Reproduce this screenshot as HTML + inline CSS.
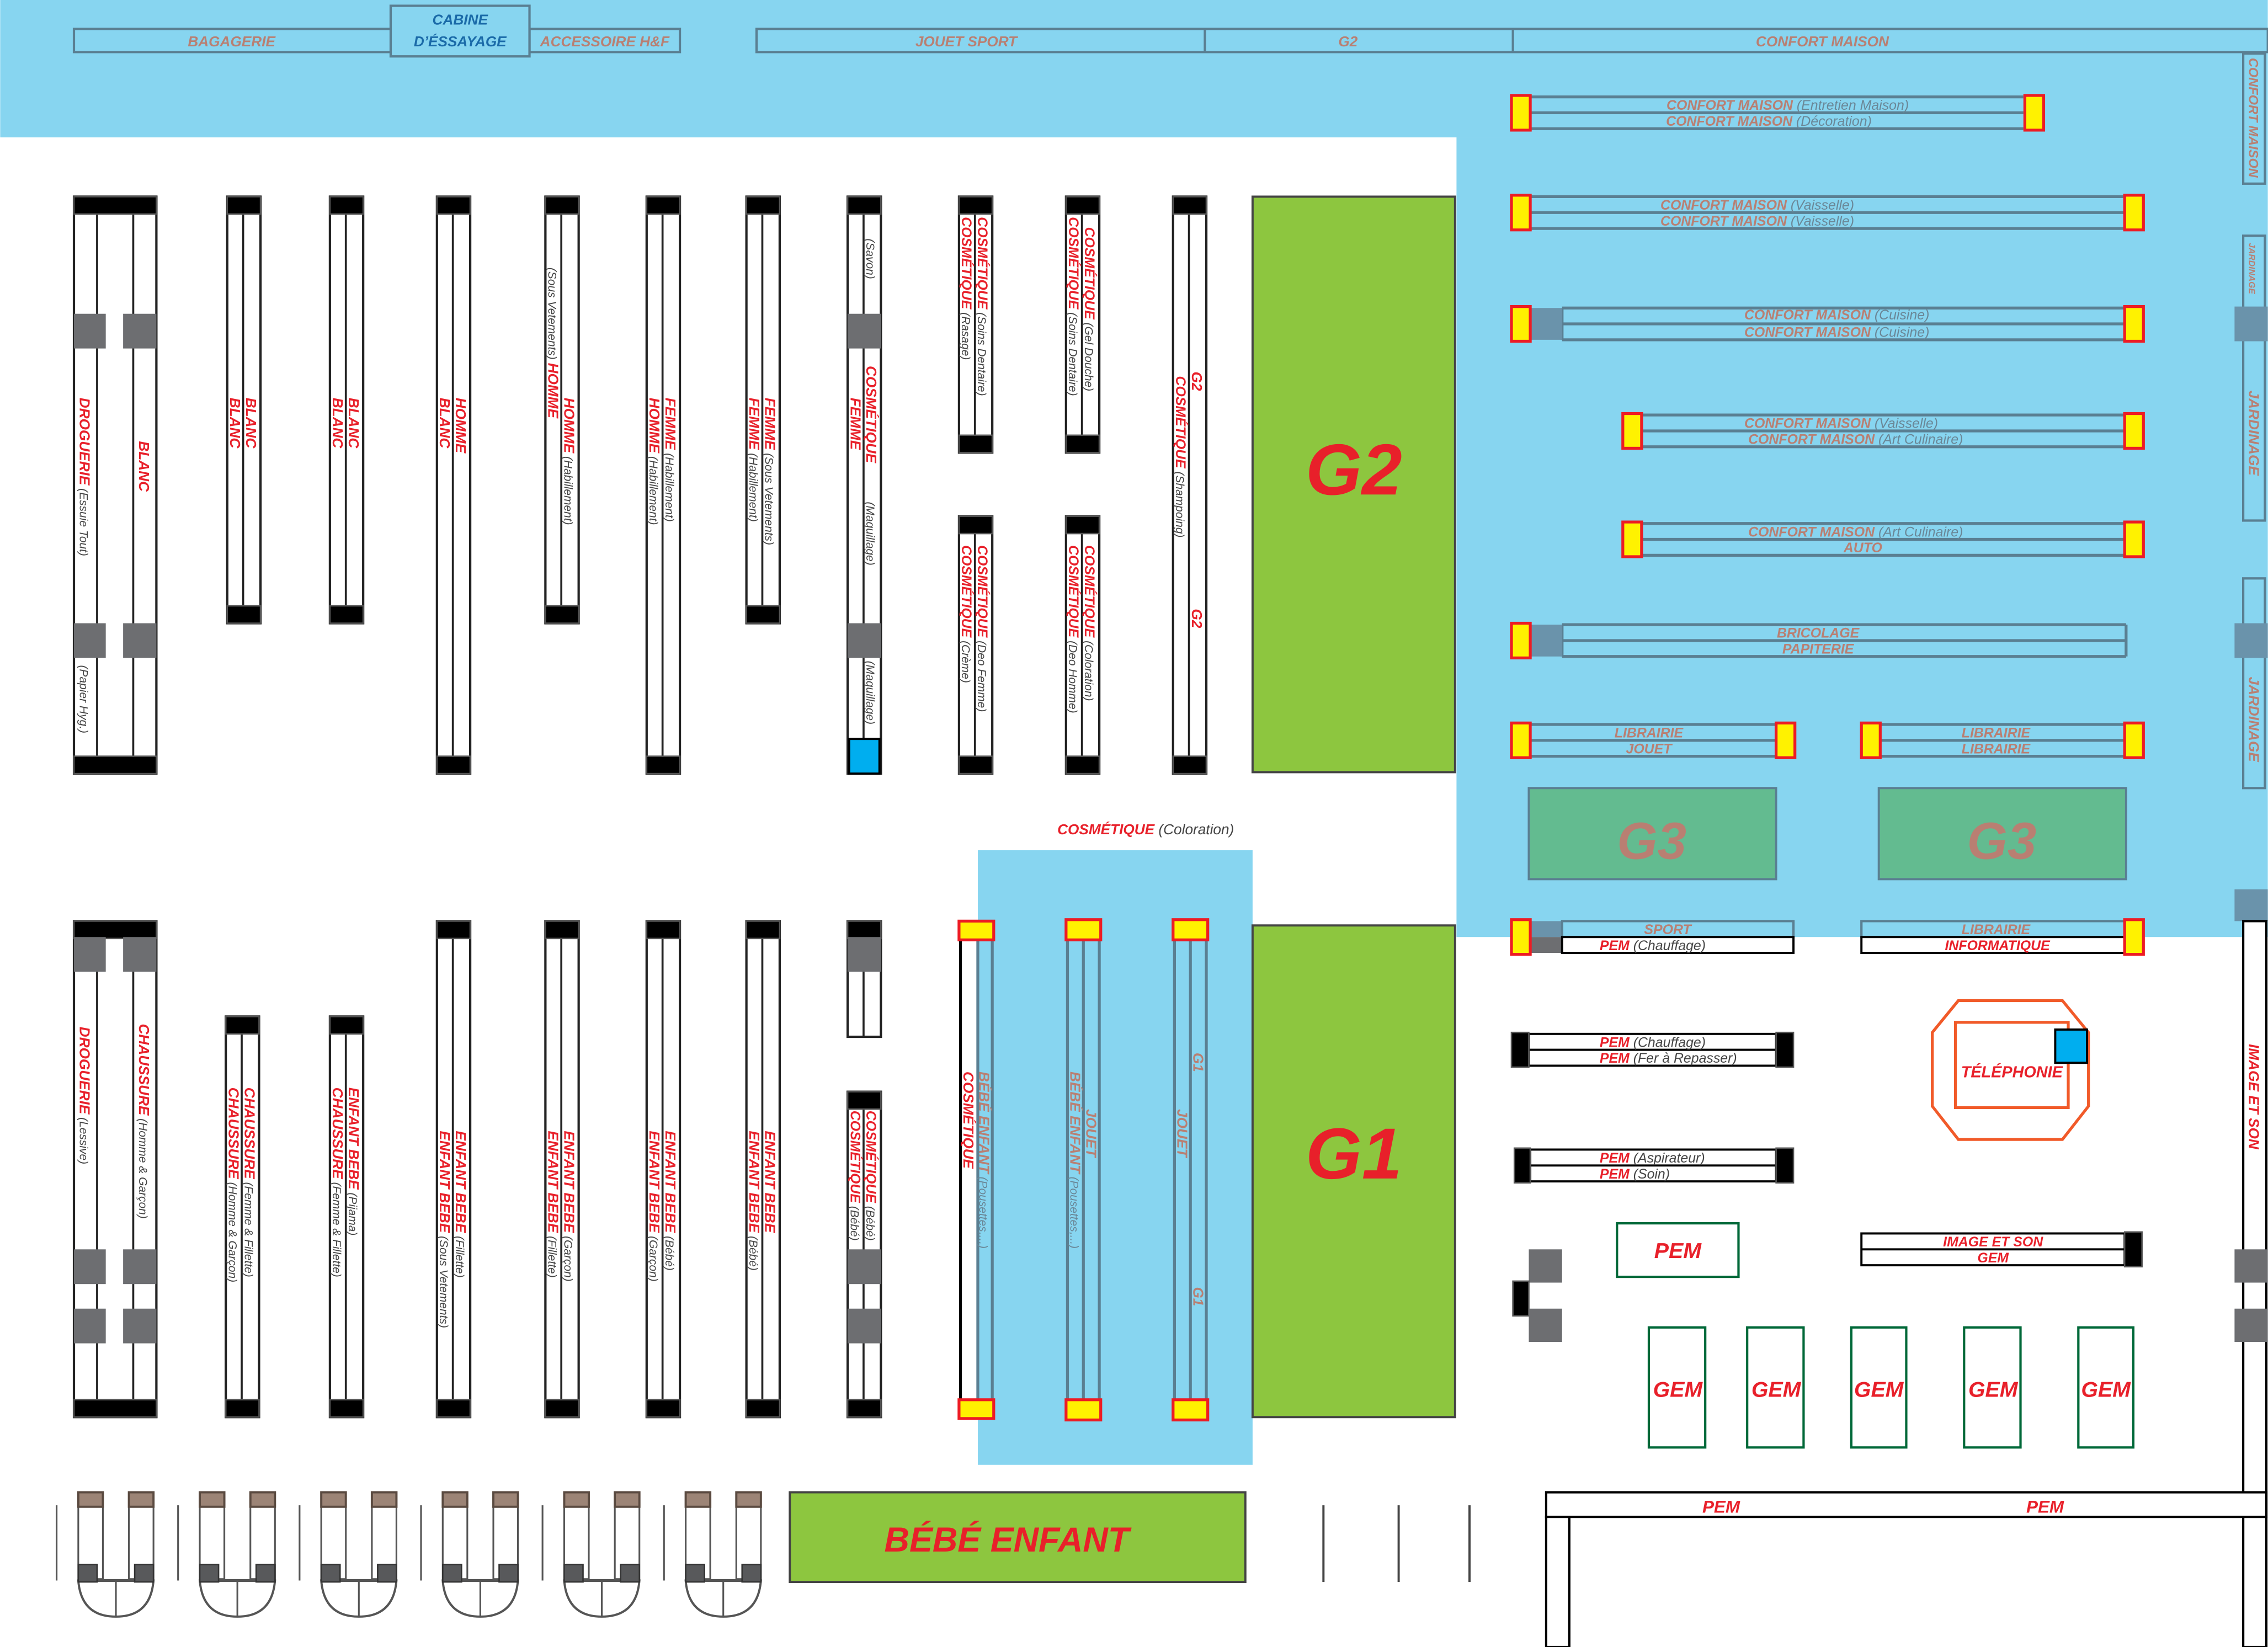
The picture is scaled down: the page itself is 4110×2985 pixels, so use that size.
<!DOCTYPE html>
<html><head><meta charset="utf-8"><style>
html,body{margin:0;padding:0;background:#fff;}
svg{display:block;}
text{font-family:"Liberation Sans Narrow","Liberation Sans",sans-serif;font-style:italic;}
.r{fill:#e8202a;font-weight:bold;}
.g{fill:#444;font-weight:normal;}
.s{fill:#b97f72;font-weight:bold;}
.p{fill:#6a8797;font-weight:normal;}
.sh{fill:#fff;stroke:#222;stroke-width:1.6;}
.ln{stroke:#222;stroke-width:1.4;}
.cap{fill:#000;stroke:#555;stroke-width:1;}
.gr{fill:#6d6e71;}
.bl{fill:#5a7f92;}
.y{fill:#fff200;stroke:#ed1c24;stroke-width:2;}
.bs{fill:none;stroke:#5a7f92;stroke-width:1.6;}
</style></head><body>
<svg width="4110" height="2985" viewBox="0 0 1568 1139" xmlns="http://www.w3.org/2000/svg">
<rect width="1568" height="1139" fill="#fff"/>
<!-- blue zones -->
<rect x="0" y="0" width="1568" height="95" fill="#87d5f0"/>
<rect x="1007" y="95" width="561" height="553" fill="#87d5f0"/>
<rect x="676" y="588" width="190" height="425" fill="#87d5f0"/>

<!-- top label bars -->
<rect x="51" y="20" width="419" height="16" class="bs"/>
<line x1="366" y1="20" x2="366" y2="36" stroke="#5a7f92" stroke-width="1.6"/>
<rect x="270" y="4" width="96" height="35" fill="#87d5f0" stroke="#5a7f92" stroke-width="1.6"/>
<text x="160" y="32" font-size="10" class="s" text-anchor="middle">BAGAGERIE</text>
<text x="318" y="17" font-size="10" fill="#1a6aa8" font-weight="bold" text-anchor="middle">CABINE</text>
<text x="318" y="32" font-size="10" fill="#1a6aa8" font-weight="bold" text-anchor="middle">D’ÉSSAYAGE</text>
<text x="418" y="32" font-size="10" class="s" text-anchor="middle">ACCESSOIRE H&amp;F</text>
<rect x="523" y="20" width="1045" height="16" class="bs"/>
<line x1="833" y1="20" x2="833" y2="36" stroke="#5a7f92" stroke-width="1.6"/>
<line x1="1046" y1="20" x2="1046" y2="36" stroke="#5a7f92" stroke-width="1.6"/>
<text x="668" y="32" font-size="10" class="s" text-anchor="middle">JOUET SPORT</text>
<text x="932" y="32" font-size="10" class="s" text-anchor="middle">G2</text>
<text x="1260" y="32" font-size="10" class="s" text-anchor="middle">CONFORT MAISON</text>

<!-- right vertical label strips -->
<rect x="1551" y="37" width="15" height="90" class="bs"/>
<text transform="translate(1555,40) rotate(90)" font-size="9" class="s">CONFORT MAISON</text>
<rect x="1551" y="163" width="15" height="197" class="bs"/>
<text transform="translate(1555,168) rotate(90)" font-size="6" class="s">JARDINAGE</text>
<text transform="translate(1555,270) rotate(90)" font-size="10" class="s">JARDINAGE</text>
<rect x="1551" y="400" width="15" height="145" class="bs"/>
<text transform="translate(1555,468) rotate(90)" font-size="10" class="s">JARDINAGE</text>
<rect x="1545" y="212" width="23" height="24" fill="#6a93ab"/>
<rect x="1545" y="431" width="23" height="24" fill="#6a93ab"/>
<rect x="1545" y="615" width="23" height="22" fill="#6a93ab"/>

<!-- ===== TOP ROW SHELVES ===== -->
<!-- double 51-108 -->
<rect x="51" y="136" width="57" height="399" class="sh"/>
<line x1="67" y1="136" x2="67" y2="535" class="ln"/><line x1="92" y1="136" x2="92" y2="535" class="ln"/>
<rect x="51" y="136" width="57" height="12" class="cap"/><rect x="51" y="523" width="57" height="12" class="cap"/>
<rect x="51" y="217" width="22" height="24" class="gr"/><rect x="85" y="217" width="23" height="24" class="gr"/>
<rect x="51" y="431" width="22" height="24" class="gr"/><rect x="85" y="431" width="23" height="24" class="gr"/>
<text transform="translate(55,275) rotate(90)" font-size="10"><tspan class="r">DROGUERIE</tspan><tspan class="g" font-size="8"> (Essuie Tout)</tspan></text>
<text transform="translate(55,460) rotate(90)" font-size="8" class="g">(Papier Hyg.)</text>
<text transform="translate(96,305) rotate(90)" font-size="10" class="r">BLANC</text>

<!-- single shelves helper pattern -->
<g>
<rect x="157" y="136" width="23" height="295" class="sh"/><line x1="168" y1="136" x2="168" y2="431" class="ln"/>
<rect x="157" y="136" width="23" height="12" class="cap"/><rect x="157" y="419" width="23" height="12" class="cap"/>
<text transform="translate(170,275) rotate(90)" font-size="10" class="r">BLANC</text>
<text transform="translate(159,275) rotate(90)" font-size="10" class="r">BLANC</text>

<rect x="228" y="136" width="23" height="295" class="sh"/><line x1="239" y1="136" x2="239" y2="431" class="ln"/>
<rect x="228" y="136" width="23" height="12" class="cap"/><rect x="228" y="419" width="23" height="12" class="cap"/>
<text transform="translate(241,275) rotate(90)" font-size="10" class="r">BLANC</text>
<text transform="translate(230,275) rotate(90)" font-size="10" class="r">BLANC</text>

<rect x="302" y="136" width="23" height="399" class="sh"/><line x1="313" y1="136" x2="313" y2="535" class="ln"/>
<rect x="302" y="136" width="23" height="12" class="cap"/><rect x="302" y="523" width="23" height="12" class="cap"/>
<text transform="translate(315,275) rotate(90)" font-size="10" class="r">HOMME</text>
<text transform="translate(304,275) rotate(90)" font-size="10" class="r">BLANC</text>

<rect x="377" y="136" width="23" height="295" class="sh"/><line x1="388" y1="136" x2="388" y2="431" class="ln"/>
<rect x="377" y="136" width="23" height="12" class="cap"/><rect x="377" y="419" width="23" height="12" class="cap"/>
<text transform="translate(390,275) rotate(90)" font-size="10"><tspan class="r">HOMME</tspan><tspan class="g" font-size="8"> (Habillement)</tspan></text>
<text transform="translate(379,185) rotate(90)" font-size="8"><tspan class="g">(Sous Vetements) </tspan><tspan class="r" font-size="10">HOMME</tspan></text>

<rect x="447" y="136" width="23" height="399" class="sh"/><line x1="458" y1="136" x2="458" y2="535" class="ln"/>
<rect x="447" y="136" width="23" height="12" class="cap"/><rect x="447" y="523" width="23" height="12" class="cap"/>
<text transform="translate(460,275) rotate(90)" font-size="10"><tspan class="r">FEMME</tspan><tspan class="g" font-size="8"> (Habillement)</tspan></text>
<text transform="translate(449,275) rotate(90)" font-size="10"><tspan class="r">HOMME</tspan><tspan class="g" font-size="8"> (Habillement)</tspan></text>

<rect x="516" y="136" width="23" height="295" class="sh"/><line x1="527" y1="136" x2="527" y2="431" class="ln"/>
<rect x="516" y="136" width="23" height="12" class="cap"/><rect x="516" y="419" width="23" height="12" class="cap"/>
<text transform="translate(529,275) rotate(90)" font-size="10"><tspan class="r">FEMME</tspan><tspan class="g" font-size="8"> (Sous Vetements)</tspan></text>
<text transform="translate(518,275) rotate(90)" font-size="10"><tspan class="r">FEMME</tspan><tspan class="g" font-size="8"> (Habillement)</tspan></text>

<rect x="586" y="136" width="23" height="399" class="sh"/><line x1="597" y1="136" x2="597" y2="535" class="ln"/>
<rect x="586" y="136" width="23" height="12" class="cap"/>
<rect x="586" y="217" width="23" height="24" class="gr"/><rect x="586" y="431" width="23" height="24" class="gr"/>
<rect x="587" y="511" width="21" height="24" fill="#00aeef" stroke="#000" stroke-width="1.5"/>
<text transform="translate(599,165) rotate(90)" font-size="8" class="g">(Savon)</text>
<text transform="translate(599,253) rotate(90)" font-size="10" class="r">COSMÉTIQUE</text>
<text transform="translate(588,275) rotate(90)" font-size="10" class="r">FEMME</text>
<text transform="translate(599,347) rotate(90)" font-size="8" class="g">(Maquillage)</text>
<text transform="translate(599,457) rotate(90)" font-size="8" class="g">(Maquillage)</text>

<rect x="663" y="136" width="23" height="177" class="sh"/><line x1="674" y1="136" x2="674" y2="313" class="ln"/>
<rect x="663" y="136" width="23" height="12" class="cap"/><rect x="663" y="301" width="23" height="12" class="cap"/>
<text transform="translate(676,150) rotate(90)" font-size="9.5"><tspan class="r">COSMÉTIQUE</tspan><tspan class="g" font-size="8"> (Soins Dentaire)</tspan></text>
<text transform="translate(665,150) rotate(90)" font-size="9.5"><tspan class="r">COSMÉTIQUE</tspan><tspan class="g" font-size="8"> (Rasage)</tspan></text>
<rect x="663" y="357" width="23" height="178" class="sh"/><line x1="674" y1="357" x2="674" y2="535" class="ln"/>
<rect x="663" y="357" width="23" height="12" class="cap"/><rect x="663" y="523" width="23" height="12" class="cap"/>
<text transform="translate(676,377) rotate(90)" font-size="9.5"><tspan class="r">COSMÉTIQUE</tspan><tspan class="g" font-size="8"> (Deo Femme)</tspan></text>
<text transform="translate(665,377) rotate(90)" font-size="9.5"><tspan class="r">COSMÉTIQUE</tspan><tspan class="g" font-size="8"> (Crème)</tspan></text>

<rect x="737" y="136" width="23" height="177" class="sh"/><line x1="748" y1="136" x2="748" y2="313" class="ln"/>
<rect x="737" y="136" width="23" height="12" class="cap"/><rect x="737" y="301" width="23" height="12" class="cap"/>
<text transform="translate(750,157) rotate(90)" font-size="9.5"><tspan class="r">COSMÉTIQUE</tspan><tspan class="g" font-size="8"> (Gel Douche)</tspan></text>
<text transform="translate(739,150) rotate(90)" font-size="9.5"><tspan class="r">COSMÉTIQUE</tspan><tspan class="g" font-size="8"> (Soins Dentaire)</tspan></text>
<rect x="737" y="357" width="23" height="178" class="sh"/><line x1="748" y1="357" x2="748" y2="535" class="ln"/>
<rect x="737" y="357" width="23" height="12" class="cap"/><rect x="737" y="523" width="23" height="12" class="cap"/>
<text transform="translate(750,377) rotate(90)" font-size="9.5"><tspan class="r">COSMÉTIQUE</tspan><tspan class="g" font-size="8"> (Coloration)</tspan></text>
<text transform="translate(739,377) rotate(90)" font-size="9.5"><tspan class="r">COSMÉTIQUE</tspan><tspan class="g" font-size="8"> (Deo Homme)</tspan></text>

<rect x="811" y="136" width="23" height="399" class="sh"/><line x1="822" y1="136" x2="822" y2="535" class="ln"/>
<rect x="811" y="136" width="23" height="12" class="cap"/><rect x="811" y="523" width="23" height="12" class="cap"/>
<text transform="translate(824,257) rotate(90)" font-size="10" class="r">G2</text>
<text transform="translate(813,260) rotate(90)" font-size="9.5"><tspan class="r">COSMÉTIQUE</tspan><tspan class="g" font-size="8"> (Shampoing)</tspan></text>
<text transform="translate(824,421) rotate(90)" font-size="10" class="r">G2</text>
</g>

<!-- G2 / G1 green -->
<rect x="866" y="136" width="140" height="398" fill="#8dc63f" stroke="#444" stroke-width="1.5"/>
<text x="936" y="342" font-size="50" class="r" text-anchor="middle" font-family="Liberation Sans">G2</text>
<rect x="866" y="640" width="140" height="340" fill="#8dc63f" stroke="#444" stroke-width="1.5"/>
<text x="936" y="815" font-size="50" class="r" text-anchor="middle" font-family="Liberation Sans">G1</text>

<text x="731" y="577" font-size="10"><tspan class="r" font-family="Liberation Sans">COSMÉTIQUE</tspan><tspan class="g" font-family="Liberation Sans"> (Coloration)</tspan></text>

<!-- ===== BOTTOM ROW SHELVES ===== -->
<rect x="51" y="637" width="57" height="343" class="sh"/>
<line x1="67" y1="637" x2="67" y2="980" class="ln"/><line x1="92" y1="637" x2="92" y2="980" class="ln"/>
<rect x="51" y="637" width="57" height="12" class="cap"/><rect x="51" y="968" width="57" height="12" class="cap"/>
<rect x="51" y="648" width="22" height="24" class="gr"/><rect x="85" y="648" width="23" height="24" class="gr"/>
<rect x="51" y="864" width="22" height="24" class="gr"/><rect x="85" y="864" width="23" height="24" class="gr"/>
<rect x="51" y="905" width="22" height="24" class="gr"/><rect x="85" y="905" width="23" height="24" class="gr"/>
<text transform="translate(55,710) rotate(90)" font-size="10"><tspan class="r">DROGUERIE</tspan><tspan class="g" font-size="8"> (Lessive)</tspan></text>
<text transform="translate(96,708) rotate(90)" font-size="10"><tspan class="r">CHAUSSURE</tspan><tspan class="g" font-size="8"> (Homme &amp; Garçon)</tspan></text>

<rect x="156" y="703" width="23" height="277" class="sh"/><line x1="167" y1="703" x2="167" y2="980" class="ln"/>
<rect x="156" y="703" width="23" height="12" class="cap"/><rect x="156" y="968" width="23" height="12" class="cap"/>
<text transform="translate(169,752) rotate(90)" font-size="10"><tspan class="r">CHAUSSURE</tspan><tspan class="g" font-size="8"> (Femme &amp; Fillette)</tspan></text>
<text transform="translate(158,752) rotate(90)" font-size="10"><tspan class="r">CHAUSSURE</tspan><tspan class="g" font-size="8"> (Homme &amp; Garçon)</tspan></text>

<rect x="228" y="703" width="23" height="277" class="sh"/><line x1="239" y1="703" x2="239" y2="980" class="ln"/>
<rect x="228" y="703" width="23" height="12" class="cap"/><rect x="228" y="968" width="23" height="12" class="cap"/>
<text transform="translate(241,752) rotate(90)" font-size="10"><tspan class="r">ENFANT BEBE</tspan><tspan class="g" font-size="8"> (Pijama)</tspan></text>
<text transform="translate(230,752) rotate(90)" font-size="10"><tspan class="r">CHAUSSURE</tspan><tspan class="g" font-size="8"> (Femme &amp; Fillette)</tspan></text>

<rect x="302" y="637" width="23" height="343" class="sh"/><line x1="313" y1="637" x2="313" y2="980" class="ln"/>
<rect x="302" y="637" width="23" height="12" class="cap"/><rect x="302" y="968" width="23" height="12" class="cap"/>
<text transform="translate(315,782) rotate(90)" font-size="10"><tspan class="r">ENFANT BEBE</tspan><tspan class="g" font-size="8"> (Fillette)</tspan></text>
<text transform="translate(304,782) rotate(90)" font-size="10"><tspan class="r">ENFANT BEBE</tspan><tspan class="g" font-size="8"> (Sous Vetements)</tspan></text>

<rect x="377" y="637" width="23" height="343" class="sh"/><line x1="388" y1="637" x2="388" y2="980" class="ln"/>
<rect x="377" y="637" width="23" height="12" class="cap"/><rect x="377" y="968" width="23" height="12" class="cap"/>
<text transform="translate(390,782) rotate(90)" font-size="10"><tspan class="r">ENFANT BEBE</tspan><tspan class="g" font-size="8"> (Garçon)</tspan></text>
<text transform="translate(379,782) rotate(90)" font-size="10"><tspan class="r">ENFANT BEBE</tspan><tspan class="g" font-size="8"> (Fillette)</tspan></text>

<rect x="447" y="637" width="23" height="343" class="sh"/><line x1="458" y1="637" x2="458" y2="980" class="ln"/>
<rect x="447" y="637" width="23" height="12" class="cap"/><rect x="447" y="968" width="23" height="12" class="cap"/>
<text transform="translate(460,782) rotate(90)" font-size="10"><tspan class="r">ENFANT BEBE</tspan><tspan class="g" font-size="8"> (Bébé)</tspan></text>
<text transform="translate(449,782) rotate(90)" font-size="10"><tspan class="r">ENFANT BEBE</tspan><tspan class="g" font-size="8"> (Garçon)</tspan></text>

<rect x="516" y="637" width="23" height="343" class="sh"/><line x1="527" y1="637" x2="527" y2="980" class="ln"/>
<rect x="516" y="637" width="23" height="12" class="cap"/><rect x="516" y="968" width="23" height="12" class="cap"/>
<text transform="translate(529,782) rotate(90)" font-size="10" class="r">ENFANT BEBE</text>
<text transform="translate(518,782) rotate(90)" font-size="10"><tspan class="r">ENFANT BEBE</tspan><tspan class="g" font-size="8"> (Bébé)</tspan></text>

<rect x="586" y="637" width="23" height="80" class="sh"/><line x1="597" y1="637" x2="597" y2="717" class="ln"/>
<rect x="586" y="637" width="23" height="12" class="cap"/><rect x="586" y="648" width="23" height="24" class="gr"/>
<rect x="586" y="755" width="23" height="225" class="sh"/><line x1="597" y1="755" x2="597" y2="980" class="ln"/>
<rect x="586" y="755" width="23" height="12" class="cap"/><rect x="586" y="968" width="23" height="12" class="cap"/>
<rect x="586" y="864" width="23" height="24" class="gr"/><rect x="586" y="905" width="23" height="24" class="gr"/>
<text transform="translate(599,768) rotate(90)" font-size="9.5"><tspan class="r">COSMÉTIQUE</tspan><tspan class="g" font-size="8"> (Bébé)</tspan></text>
<text transform="translate(588,768) rotate(90)" font-size="9.5"><tspan class="r">COSMÉTIQUE</tspan><tspan class="g" font-size="8"> (Bébé)</tspan></text>

<!-- blue-area shelves -->
<rect x="664" y="650" width="12" height="318" fill="#fff"/>
<line x1="664" y1="650" x2="664" y2="968" stroke="#000" stroke-width="2"/>
<line x1="676" y1="650" x2="676" y2="968" class="bl" stroke="#5a7f92" stroke-width="2"/>
<line x1="686" y1="650" x2="686" y2="968" stroke="#5a7f92" stroke-width="2"/>
<rect x="663" y="637" width="24" height="13" class="y"/><rect x="663" y="968" width="24" height="13" class="y"/>
<text transform="translate(666,741) rotate(90)" font-size="10" class="r">COSMÉTIQUE</text>
<text transform="translate(677,741) rotate(90)" font-size="10"><tspan class="s">BÉBÉ ENFANT</tspan><tspan class="p" font-size="8"> (Pousettes,...)</tspan></text>

<line x1="738" y1="650" x2="738" y2="968" stroke="#5a7f92" stroke-width="2"/>
<line x1="749" y1="650" x2="749" y2="968" stroke="#5a7f92" stroke-width="2"/>
<line x1="760" y1="650" x2="760" y2="968" stroke="#5a7f92" stroke-width="2"/>
<rect x="737" y="636" width="24" height="14" class="y"/><rect x="737" y="968" width="24" height="14" class="y"/>
<text transform="translate(751,767) rotate(90)" font-size="10" class="s">JOUET</text>
<text transform="translate(740,741) rotate(90)" font-size="10"><tspan class="s">BÉBÉ ENFANT</tspan><tspan class="p" font-size="8"> (Pousettes,...)</tspan></text>

<line x1="812" y1="650" x2="812" y2="968" stroke="#5a7f92" stroke-width="2"/>
<line x1="823" y1="650" x2="823" y2="968" stroke="#5a7f92" stroke-width="2"/>
<line x1="834" y1="650" x2="834" y2="968" stroke="#5a7f92" stroke-width="2"/>
<rect x="811" y="636" width="24" height="14" class="y"/><rect x="811" y="968" width="24" height="14" class="y"/>
<text transform="translate(825,728) rotate(90)" font-size="10" class="s">G1</text>
<text transform="translate(814,767) rotate(90)" font-size="10" class="s">JOUET</text>
<text transform="translate(825,890) rotate(90)" font-size="10" class="s">G1</text>

<!-- ===== RIGHT SIDE HORIZONTAL SHELVES ===== -->
<g stroke="#5a7f92" stroke-width="2">
<line x1="1058" y1="67" x2="1399" y2="67"/><line x1="1058" y1="78" x2="1399" y2="78"/><line x1="1058" y1="89" x2="1399" y2="89"/>
<line x1="1058" y1="136" x2="1469" y2="136"/><line x1="1058" y1="147" x2="1469" y2="147"/><line x1="1058" y1="158" x2="1469" y2="158"/>
<line x1="1080" y1="213" x2="1469" y2="213"/><line x1="1080" y1="224" x2="1469" y2="224"/><line x1="1080" y1="235" x2="1469" y2="235"/>
<line x1="1080" y1="213" x2="1080" y2="235"/>
<line x1="1135" y1="287" x2="1469" y2="287"/><line x1="1135" y1="298" x2="1469" y2="298"/><line x1="1135" y1="309" x2="1469" y2="309"/>
<line x1="1135" y1="362" x2="1469" y2="362"/><line x1="1135" y1="373" x2="1469" y2="373"/><line x1="1135" y1="384" x2="1469" y2="384"/>
<line x1="1080" y1="432" x2="1470" y2="432"/><line x1="1080" y1="443" x2="1470" y2="443"/><line x1="1080" y1="454" x2="1470" y2="454"/>
<line x1="1080" y1="432" x2="1080" y2="454"/><line x1="1470" y1="432" x2="1470" y2="454"/>
<line x1="1058" y1="501" x2="1228" y2="501"/><line x1="1058" y1="512" x2="1228" y2="512"/><line x1="1058" y1="523" x2="1228" y2="523"/>
<line x1="1300" y1="501" x2="1469" y2="501"/><line x1="1300" y1="512" x2="1469" y2="512"/><line x1="1300" y1="523" x2="1469" y2="523"/>
</g>
<rect x="1058" y="213" width="22" height="22" fill="#6a93ab"/>
<rect x="1058" y="432" width="22" height="22" fill="#6a93ab"/>
<g font-size="9.5" text-anchor="middle">
<text x="1236" y="76"><tspan class="s">CONFORT MAISON</tspan><tspan class="p"> (Entretien Maison)</tspan></text>
<text x="1223" y="87"><tspan class="s">CONFORT MAISON</tspan><tspan class="p"> (Décoration)</tspan></text>
<text x="1215" y="145"><tspan class="s">CONFORT MAISON</tspan><tspan class="p"> (Vaisselle)</tspan></text>
<text x="1215" y="156"><tspan class="s">CONFORT MAISON</tspan><tspan class="p"> (Vaisselle)</tspan></text>
<text x="1270" y="221"><tspan class="s">CONFORT MAISON</tspan><tspan class="p"> (Cuisine)</tspan></text>
<text x="1270" y="233"><tspan class="s">CONFORT MAISON</tspan><tspan class="p"> (Cuisine)</tspan></text>
<text x="1273" y="296"><tspan class="s">CONFORT MAISON</tspan><tspan class="p"> (Vaisselle)</tspan></text>
<text x="1283" y="307"><tspan class="s">CONFORT MAISON</tspan><tspan class="p"> (Art Culinaire)</tspan></text>
<text x="1283" y="371"><tspan class="s">CONFORT MAISON</tspan><tspan class="p"> (Art Culinaire)</tspan></text>
<text x="1288" y="382" class="s">AUTO</text>
<text x="1257" y="441" class="s">BRICOLAGE</text>
<text x="1257" y="452" class="s">PAPITERIE</text>
<text x="1140" y="510" class="s">LIBRAIRIE</text>
<text x="1140" y="521" class="s">JOUET</text>
<text x="1380" y="510" class="s">LIBRAIRIE</text>
<text x="1380" y="521" class="s">LIBRAIRIE</text>
</g>
<!-- yellow caps -->
<rect x="1045" y="66" width="13" height="24" class="y"/><rect x="1400" y="66" width="13" height="24" class="y"/>
<rect x="1045" y="135" width="13" height="24" class="y"/><rect x="1469" y="135" width="13" height="24" class="y"/>
<rect x="1045" y="212" width="13" height="24" class="y"/><rect x="1469" y="212" width="13" height="24" class="y"/>
<rect x="1122" y="286" width="13" height="24" class="y"/><rect x="1469" y="286" width="13" height="24" class="y"/>
<rect x="1122" y="361" width="13" height="24" class="y"/><rect x="1469" y="361" width="13" height="24" class="y"/>
<rect x="1045" y="431" width="13" height="24" class="y"/>
<rect x="1045" y="500" width="13" height="24" class="y"/><rect x="1228" y="500" width="13" height="24" class="y"/>
<rect x="1287" y="500" width="13" height="24" class="y"/><rect x="1469" y="500" width="13" height="24" class="y"/>

<!-- G3 -->
<rect x="1057" y="545" width="171" height="63" fill="#63bb90" stroke="#5a7f92" stroke-width="1.5"/>
<text x="1142" y="594" font-size="36" class="s" text-anchor="middle" font-family="Liberation Sans">G3</text>
<rect x="1299" y="545" width="171" height="63" fill="#63bb90" stroke="#5a7f92" stroke-width="1.5"/>
<text x="1384" y="594" font-size="36" class="s" text-anchor="middle" font-family="Liberation Sans">G3</text>

<!-- SPORT / PEM row -->
<rect x="1058" y="637" width="22" height="11" fill="#6a93ab"/><rect x="1058" y="648" width="22" height="11" class="gr"/>
<rect x="1080" y="637" width="160" height="11" class="bs"/>
<rect x="1080" y="648" width="160" height="11" fill="#fff" stroke="#000" stroke-width="1.5"/>
<text x="1153" y="646" font-size="9.5" class="s" text-anchor="middle">SPORT</text>
<text x="1106" y="657" font-size="9.5"><tspan class="r">PEM</tspan><tspan class="g">  (Chauffage)</tspan></text>
<rect x="1045" y="636" width="13" height="24" class="y"/>
<rect x="1287" y="637" width="182" height="11" class="bs"/>
<rect x="1287" y="648" width="182" height="11" fill="#fff" stroke="#000" stroke-width="1.5"/>
<text x="1380" y="646" font-size="9.5" class="s" text-anchor="middle">LIBRAIRIE</text>
<text x="1381" y="657" font-size="9.5" class="r" text-anchor="middle">INFORMATIQUE</text>
<rect x="1469" y="636" width="13" height="24" class="y"/>

<!-- PEM shelves -->
<rect x="1057" y="715" width="171" height="22" fill="#fff" stroke="#000" stroke-width="1.5"/>
<line x1="1057" y1="726" x2="1228" y2="726" stroke="#000" stroke-width="1.5"/>
<rect x="1045" y="714" width="12" height="24" class="cap"/><rect x="1228" y="714" width="12" height="24" class="cap"/>
<text x="1106" y="724" font-size="9.5"><tspan class="r">PEM</tspan><tspan class="g">  (Chauffage)</tspan></text>
<text x="1106" y="735" font-size="9.5"><tspan class="r">PEM</tspan><tspan class="g">  (Fer à Repasser)</tspan></text>
<rect x="1058" y="795" width="170" height="22" fill="#fff" stroke="#000" stroke-width="1.5"/>
<line x1="1058" y1="806" x2="1228" y2="806" stroke="#000" stroke-width="1.5"/>
<rect x="1047" y="794" width="11" height="24" class="cap"/><rect x="1228" y="794" width="12" height="24" class="cap"/>
<text x="1106" y="804" font-size="9.5"><tspan class="r">PEM</tspan><tspan class="g">  (Aspirateur)</tspan></text>
<text x="1106" y="815" font-size="9.5"><tspan class="r">PEM</tspan><tspan class="g">  (Soin)</tspan></text>

<rect x="1118" y="846" width="84" height="37" fill="#fff" stroke="#006838" stroke-width="1.6"/>
<text x="1160" y="870" font-size="15" class="r" text-anchor="middle" font-family="Liberation Sans">PEM</text>

<rect x="1287" y="853" width="182" height="22" fill="#fff" stroke="#000" stroke-width="1.5"/>
<line x1="1287" y1="864" x2="1469" y2="864" stroke="#000" stroke-width="1.5"/>
<rect x="1469" y="852" width="12" height="24" class="cap"/>
<text x="1378" y="862" font-size="9.5" class="r" text-anchor="middle">IMAGE ET SON</text>
<text x="1378" y="873" font-size="9.5" class="r" text-anchor="middle">GEM</text>

<!-- telephonie -->
<polygon points="1354,692 1426,692 1444,714 1444,765 1426,788 1354,788 1336,765 1336,714" fill="none" stroke="#f15a29" stroke-width="2"/>
<rect x="1352" y="707" width="78" height="59" fill="none" stroke="#f15a29" stroke-width="2"/>
<rect x="1421" y="712" width="22" height="23" fill="#00aeef" stroke="#000" stroke-width="1.5"/>
<text x="1391" y="745" font-size="11" class="r" text-anchor="middle">TÉLÉPHONIE</text>

<!-- small squares -->
<rect x="1057" y="864" width="23" height="23" class="gr"/>
<rect x="1046" y="886" width="11" height="24" class="cap"/>
<rect x="1057" y="905" width="23" height="23" class="gr"/>

<!-- GEM -->
<g fill="#fff" stroke="#006838" stroke-width="1.6">
<rect x="1140" y="918" width="39" height="83"/>
<rect x="1208" y="918" width="39" height="83"/>
<rect x="1280" y="918" width="38" height="83"/>
<rect x="1358" y="918" width="39" height="83"/>
<rect x="1437" y="918" width="38" height="83"/>
</g>
<g font-size="15" class="r" text-anchor="middle" font-family="Liberation Sans">
<text x="1160" y="966" class="r">GEM</text><text x="1228" y="966" class="r">GEM</text>
<text x="1299" y="966" class="r">GEM</text><text x="1378" y="966" class="r">GEM</text>
<text x="1456" y="966" class="r">GEM</text>
</g>

<!-- right image et son -->
<rect x="1551" y="637" width="16" height="502" fill="#fff" stroke="#000" stroke-width="1.6"/>
<text transform="translate(1555,722) rotate(90)" font-size="10" class="r" font-family="Liberation Sans">IMAGE ET SON</text>
<rect x="1545" y="864" width="23" height="23" class="gr"/>
<rect x="1545" y="905" width="23" height="23" class="gr"/>

<!-- bottom PEM -->
<rect x="1069" y="1032" width="498" height="17" fill="#fff" stroke="#000" stroke-width="1.6"/>
<rect x="1069" y="1049" width="16" height="90" fill="#fff" stroke="#000" stroke-width="1.6"/>
<text x="1190" y="1046" font-size="12" class="r" text-anchor="middle" font-family="Liberation Sans">PEM</text>
<text x="1414" y="1046" font-size="12" class="r" text-anchor="middle" font-family="Liberation Sans">PEM</text>

<!-- BEBE ENFANT -->
<rect x="546" y="1032" width="315" height="62" fill="#8dc63f" stroke="#444" stroke-width="1.5"/>
<text x="696" y="1073" font-size="24" class="r" text-anchor="middle" font-family="Liberation Sans">BÉBÉ ENFANT</text>

<g stroke="#444" stroke-width="1.5">
<line x1="915" y1="1041" x2="915" y2="1094"/><line x1="967" y1="1041" x2="967" y2="1094"/><line x1="1016" y1="1041" x2="1016" y2="1094"/>
</g>

<!-- checkout units -->
<defs>
<g id="ck">
<line x1="-15" y1="1041" x2="-15" y2="1093" stroke="#555" stroke-width="1.2"/>
<rect x="0" y="1042" width="17" height="50" fill="#fff" stroke="#555" stroke-width="1.2"/>
<rect x="35" y="1042" width="17" height="50" fill="#fff" stroke="#555" stroke-width="1.2"/>
<rect x="0" y="1032" width="17" height="10" fill="#9c8476" stroke="#5a4a40" stroke-width="1.5"/>
<rect x="35" y="1032" width="17" height="10" fill="#9c8476" stroke="#5a4a40" stroke-width="1.5"/>
<path d="M0,1093 Q2,1118 26,1118 Q50,1118 52,1093 Z" fill="#fff" stroke="#555" stroke-width="1.5"/>
<line x1="26" y1="1093" x2="26" y2="1118" stroke="#555" stroke-width="1.2"/>
<line x1="0" y1="1093" x2="52" y2="1093" stroke="#555" stroke-width="2"/>
<rect x="0" y="1082" width="13" height="12" fill="#58595b" stroke="#333" stroke-width="1"/>
<rect x="39" y="1082" width="13" height="12" fill="#58595b" stroke="#333" stroke-width="1"/>
</g>
</defs>
<use href="#ck" x="54"/><use href="#ck" x="138"/><use href="#ck" x="222"/>
<use href="#ck" x="306"/><use href="#ck" x="390"/><use href="#ck" x="474"/>
</svg>
</body></html>
